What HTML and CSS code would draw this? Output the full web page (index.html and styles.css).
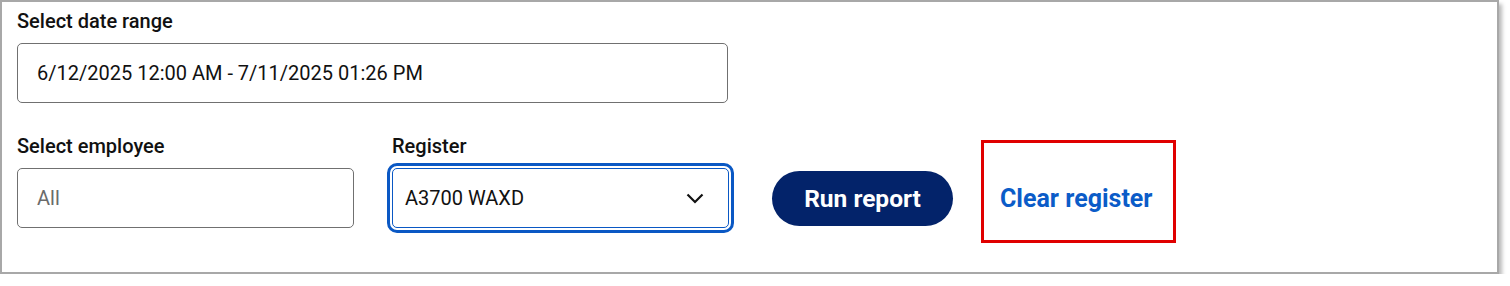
FILE: index.html
```html
<!doctype html>
<html lang="en">
<head>
    <meta charset="UTF-8">
    <title>Report filters</title>
    <link rel="stylesheet" href="styles.css">
</head>
<body>
<div class="panel">
    <div class="field">
        <label class="label">Select date range</label>
        <div class="input date">6/12/2025 12:00 AM - 7/11/2025 01:26 PM</div>
    </div>
    <div class="row">
        <div class="field">
            <label class="label">Select employee</label>
            <div class="input small placeholder">All</div>
        </div>
        <div class="field reg">
            <label class="label">Register</label>
            <div class="input small select">
                <span>A3700 WAXD</span>
                <svg class="chev" width="18" height="11" viewBox="0 0 18 11">
                    <path d="M1.5 1.5 L9 9 L16.5 1.5" fill="none" stroke="#111" stroke-width="2.2"/>
                </svg>
            </div>
        </div>
        <div class="btn">Run report</div>
        <div class="clear">Clear register</div>
    </div>
</div>
</body>
</html>
```

FILE: styles.css
```css
*{
    margin: 0;
    padding: 0;
    box-sizing: border-box;
}
body{
    font-family: Roboto, "Liberation Sans", sans-serif;
    color: #111;
    background: #fff;
}
.panel{
    width: 1499px;
    height: 274px;
    border: 2px solid #a8a8a8;
    box-shadow: 3px 4px 4px rgba(0,0,0,0.28);
    padding: 8px 15px 0 15px;
}
.label{
    display: block;
    font-size: 20px;
    font-weight: 500;
    line-height: 23px;
    margin-bottom: 10px;
}
.input{
    height: 60px;
    border: 1px solid #707070;
    border-radius: 5px;
    font-size: 20px;
    display: flex;
    align-items: center;
    padding-left: 19px;
}
.date{
    width: 711px;
}
.row{
    display: flex;
    align-items: flex-start;
    margin-top: 32px;
}
.small{
    width: 337px;
}
.placeholder{
    color: #6b6b6b;
}
.reg{
    margin-left: 38px;
}
.select{
    border-color: #0a58c4;
    outline: 3px solid #0a58c4;
    outline-offset: 2px;
    padding-left: 12px;
    padding-right: 24px;
    justify-content: space-between;
}
.btn{
    margin-top: 36px;
    margin-left: 43px;
    width: 181px;
    height: 55px;
    border-radius: 28px;
    background: #03236a;
    color: #fff;
    font-size: 24.5px;
    font-weight: 700;
    display: flex;
    align-items: center;
    justify-content: center;
}
.clear{
    margin-top: 5px;
    margin-left: 28px;
    width: 195px;
    height: 103px;
    border: 3px solid #e00000;
    color: #0b5cc8;
    font-size: 25px;
    font-weight: 700;
    display: flex;
    align-items: center;
    padding-left: 16px;
    padding-top: 14px;
}
```
